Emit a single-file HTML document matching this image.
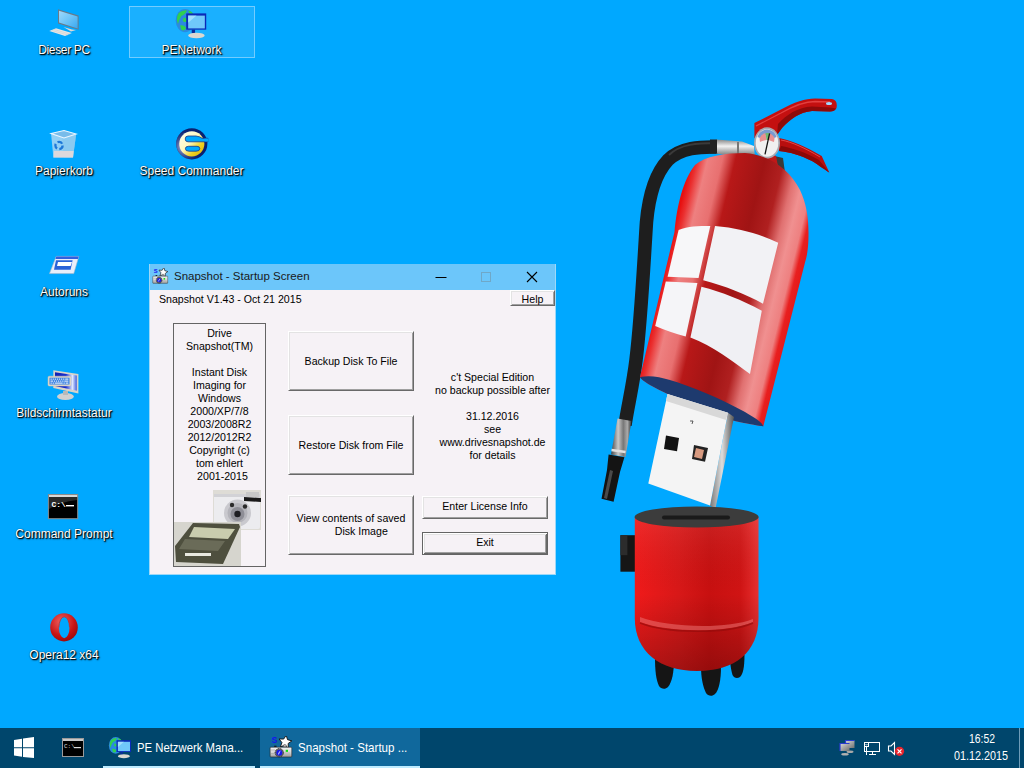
<!DOCTYPE html>
<html><head><meta charset="utf-8">
<style>
html,body{margin:0;padding:0;}
body{width:1024px;height:768px;overflow:hidden;position:relative;background:#00A8FF;font-family:"Liberation Sans",sans-serif;}
.abs{position:absolute;}
.lbl{position:absolute;color:#fff;font-size:12px;text-align:center;white-space:nowrap;text-shadow:1px 1px 1px #000,1px 1px 2px rgba(0,0,0,.8),0 0 1px rgba(0,0,0,.6);line-height:14px;}
#win{position:absolute;left:149px;top:264px;width:407px;height:311px;box-sizing:border-box;border:1px solid #9CD8F8;border-top:0;background:#F6F2F6;box-shadow:inset 0 26px 0 #6CC6FA;}

.t{position:absolute;font-size:10.6px;color:#000;white-space:nowrap;line-height:13px;}
.btn{position:absolute;box-sizing:border-box;background:#F6F2F6;border-top:1px solid #fff;border-left:1px solid #fff;border-right:1px solid #696969;border-bottom:1px solid #696969;box-shadow:inset 1px 1px 0 #E3E3E3,inset -1px -1px 0 #A0A0A0;}
.def{border:1px solid #646464;box-shadow:inset 1px 1px 0 #fff,inset -1px -1px 0 #696969,inset 2px 2px 0 #E3E3E3,inset -2px -2px 0 #A0A0A0;}
#tb{position:absolute;left:0;top:728px;width:1024px;height:40px;background:#00466C;}
.tt{position:absolute;color:#fff;font-size:12px;white-space:nowrap;line-height:14px;}
</style></head>
<body>
<svg width="0" height="0" style="position:absolute"><defs>
 <linearGradient id="snb" x1="0" y1="0" x2="0" y2="1"><stop offset="0" stop-color="#F4F4F4"/><stop offset="0.6" stop-color="#D0D0D0"/><stop offset="1" stop-color="#9A9A9A"/></linearGradient>
 <symbol id="snapico" viewBox="0 0 24 24">
  <text x="2.4" y="7.2" font-family="Liberation Sans" font-weight="bold" font-size="8.5" fill="#1414F0">S</text>
  <path d="M17.22,-0.72 L18.52,3.65 L22.91,4.89 L19.15,7.48 L19.33,12.04 L15.71,9.26 L11.43,10.84 L12.94,6.54 L10.12,2.96 L14.68,3.07 Z" fill="#fff" stroke="#111" stroke-width=".9"/>
  <path d="M14.3,11 L14.3,9 Q15.8,7.8 17.3,9 L17.3,11 Z" fill="#bbb" stroke="#444" stroke-width=".5"/>
  <rect x="5.2" y="9.7" width="2.3" height="1.2" fill="#111"/>
  <rect x="1.1" y="11.2" width="21.7" height="9.8" rx=".8" fill="url(#snb)" stroke="#222" stroke-width=".6"/>
  <path d="M2,14 H6 M2,17.5 H6 M15,17 H21 M15,19 H21" stroke="#A8A8A8" stroke-width=".7"/>
  <circle cx="10.3" cy="16.7" r="4.2" fill="#666" stroke="#222" stroke-width=".9" stroke-dasharray="1 .8"/>
  <circle cx="10.3" cy="16.7" r="3" fill="#1818E8"/>
  <path d="M9.6,18.4 Q9.8,15.8 11.4,15.2" stroke="#fff" stroke-width=".9" fill="none"/>
  <rect x="16.7" y="13.8" width="2.3" height="2.1" fill="#10E010"/>
 </symbol>
 <symbol id="peico" viewBox="0 0 24 24">
  <ellipse cx="7.65" cy="9.4" rx="6.8" ry="8.4" fill="#2A8AE0"/>
  <path d="M3,4 Q6,1.5 9,2 Q8,5 5,6 Q3,9 2.5,12 Q0.8,8 3,4 Z M10,2 Q13,3 14,5 Q12,6 10.5,4 Z M4,13 Q7,12 8.5,15 Q7,17.5 5,16 Z M6.5,7.5 Q9,7 9,10 Q7,11 6,9.5 Z" fill="#30D050"/>
  <rect x="8.5" y="4.2" width="14.5" height="11.8" fill="#0A2AB8"/>
  <rect x="9.9" y="5.8" width="12.1" height="9.3" fill="#70C8FA"/>
  <path d="M9.9,5.8 L16,5.8 L9.9,11 Z" fill="#B8E8FF" opacity=".7"/>
  <rect x="12.5" y="16" width="2.4" height="2.5" fill="#0A2A9A"/>
  <ellipse cx="15.9" cy="20.2" rx="6" ry="2" fill="#DCD8D0"/>
 </symbol></defs></svg>
<!-- desktop icons -->
<svg class="abs" style="left:0;top:0" width="260" height="700">
 <defs>
  <linearGradient id="scr" x1="0" y1="0" x2="1" y2="1"><stop offset="0" stop-color="#9ED8FA"/><stop offset="0.5" stop-color="#6CC4F8"/><stop offset="1" stop-color="#3AA8F0"/></linearGradient>
  <radialGradient id="opg" cx="0.4" cy="0.3" r="0.8"><stop offset="0" stop-color="#F06060"/><stop offset="0.6" stop-color="#C81414"/><stop offset="1" stop-color="#900808"/></radialGradient>
  <linearGradient id="kbs" x1="0" y1="0" x2="1" y2="0"><stop offset="0" stop-color="#1020B0"/><stop offset="0.5" stop-color="#1830D0"/><stop offset="0.8" stop-color="#E0E8FF"/><stop offset="1" stop-color="#4060E0"/></linearGradient>
  <linearGradient id="scg" x1="0" y1="0" x2="1" y2="1"><stop offset="0" stop-color="#FFFFF4"/><stop offset="0.45" stop-color="#FFF8C0"/><stop offset="0.7" stop-color="#F0D020"/><stop offset="1" stop-color="#D8B000"/></linearGradient>
  <radialGradient id="scr2" cx="0.25" cy="0.6" r="0.6"><stop offset="0" stop-color="#C8D8F8"/><stop offset="1" stop-color="#0A2070" stop-opacity="0"/></radialGradient>
 </defs>
 <!-- Dieser PC -->
 <path d="M58,9.3 L78.6,15.6 L78.6,29.8 L58,23.4 Z" fill="#6A7A88"/>
 <path d="M59,10.8 L77.6,16.5 L77.6,28.5 L59,22.6 Z" fill="url(#scr)"/>
 <path d="M63.5,27 L72,29.5 L76,30 L71,31.5 Z" fill="#DADADA"/>
 <path d="M49.3,31 L56,28.3 L71.8,33 L65,36.1 Z" fill="#E6E6E6"/>
 <path d="M52,30.5 L68,35 M54,29.5 L70,34" stroke="#C8C8C8" stroke-width=".5"/>
 <!-- PENetwork selection -->
 <rect x="129.5" y="6.5" width="125" height="51" fill="rgba(255,255,255,0.1)" stroke="rgba(150,215,255,0.75)" stroke-width="1"/>
 <use href="#peico" x="174.5" y="7.6" width="33.1" height="33.1"/>
 <!-- Papierkorb -->
 <path d="M51.1,134 L76.1,134.5 L73,157.5 L53.4,157.5 Z" fill="#9ED4F4" opacity=".92"/>
 <path d="M62,136 L76.1,134.5 L73,157.5 L64,157.5 Z" fill="#86C6EE" opacity=".6"/>
 <path d="M51.1,133.5 L64,130.5 L76.1,134 L64,138 Z" fill="#78BCEA" stroke="#EAF6FF" stroke-width="1.1"/>
 <path d="M54,151 L73.6,151 L73,157.5 L53.4,157.5 Z" fill="#DCD8DC"/>
 <circle cx="59" cy="145.5" r="3.6" fill="none" stroke="#1E78D8" stroke-width="2.3" stroke-dasharray="5.2 2.3"/>
 <!-- Speed Commander -->
 <circle cx="191.8" cy="143.8" r="15.6" fill="#0A2070"/>
 <circle cx="191.8" cy="143.8" r="15.6" fill="url(#scr2)"/>
 <circle cx="191.8" cy="143.8" r="12.6" fill="url(#scg)"/>
 <path d="M188,136 L196,136 Q200,136.5 202,138.3 L208,138.3 L208,141.8 L188,141.8 Q185.2,141.8 185.2,139 Q185.2,136 188,136 Z" fill="#00A8FF" stroke="#1A3A88" stroke-width=".8"/>
 <path d="M188.5,146.3 L197,146.3 Q199.8,146.3 199.8,148.7 Q199.8,151.2 196,151.2 L189,151.2 Q185.4,151.2 185.4,148.7 Q185.4,146.3 188.5,146.3 Z" fill="#00A8FF" stroke="#1A3A88" stroke-width=".8"/>
 <path d="M204.5,138.6 L208.5,138.6 L208.5,141.5 L204.5,141.5 Z" fill="#00A8FF"/>
 <!-- Autoruns -->
 <path d="M56.2,256.4 L78.8,256.4 L73.75,273.6 L49.5,273.6 Z" fill="#E8EEFA" stroke="#B0B8C8" stroke-width=".6"/>
 <path d="M56.2,256.4 L78.8,256.4 L78,259 L55.5,259 Z" fill="#3060E0"/>
 <path d="M56,260.3 L72.6,260.3 L70.6,269.7 L54,269.7 Z" fill="#2A62D8"/>
 <path d="M58,262 L72,262 L70.6,266 L57,266 Z" fill="#fff"/>
 <!-- Bildschirmtastatur -->
 <ellipse cx="65.4" cy="396.5" rx="8.4" ry="3.6" fill="#D0D0D0"/>
 <rect x="63" y="391" width="5" height="4" fill="#B8B8B8"/>
 <path d="M53.3,370.2 L78.4,374 L78.4,393.6 L53.3,388 Z" fill="#D8D4CA"/>
 <path d="M55,372.3 L76.8,375.6 L76.8,390.8 L55,386 Z" fill="url(#kbs)"/>
 <rect x="48" y="376.2" width="23" height="9.8" rx="1.2" fill="#E2DCCC" stroke="#C8C0B0" stroke-width=".5"/>
 <rect x="49.5" y="377.7" width="20" height="6.8" fill="#2E7AE0"/>
 <g fill="#fff">
  <rect x="50.5" y="378.6" width="1.3" height="1"/><rect x="52.6" y="378.6" width="1.3" height="1"/><rect x="54.7" y="378.6" width="1.3" height="1"/><rect x="56.8" y="378.6" width="1.3" height="1"/><rect x="58.9" y="378.6" width="1.3" height="1"/><rect x="61" y="378.6" width="1.3" height="1"/><rect x="63.1" y="378.6" width="1.3" height="1"/><rect x="65.2" y="378.6" width="3.2" height="1"/>
  <rect x="50.5" y="380.6" width="2.5" height="1"/><rect x="53.8" y="380.6" width="1.3" height="1"/><rect x="55.9" y="380.6" width="1.3" height="1"/><rect x="58" y="380.6" width="1.3" height="1"/><rect x="60.1" y="380.6" width="1.3" height="1"/><rect x="62.2" y="380.6" width="1.3" height="1"/><rect x="64.3" y="380.6" width="4.1" height="1"/>
  <rect x="50.5" y="382.6" width="1.3" height="1"/><rect x="52.6" y="382.6" width="1.3" height="1"/><rect x="54.7" y="382.6" width="8" height="1"/><rect x="63.5" y="382.6" width="1.3" height="1"/><rect x="65.6" y="382.6" width="2.8" height="1"/>
 </g>
 <!-- Command Prompt -->
 <rect x="48.4" y="494.5" width="29.3" height="24.2" fill="#000" stroke="#8C8C8C" stroke-width="1"/>
 <rect x="49" y="495" width="28.3" height="2.2" fill="#D8D8D8"/>
 <path d="M49,497 L77,497 L77,500 Q60,502 49,509 Z" fill="#2a2a2a"/>
 <text x="51.5" y="506.5" font-family="Liberation Mono" font-size="8" fill="#fff" font-weight="bold">C:\</text>
 <rect x="66" y="505" width="8" height="1.4" fill="#fff"/>
 <!-- Opera -->
 <ellipse cx="64" cy="627.4" rx="13.8" ry="14.1" fill="url(#opg)"/>
 <ellipse cx="64.2" cy="627.5" rx="5.3" ry="10.7" fill="#00A8FF"/>
 <path d="M58.9,627.5 A5.3,10.7 0 0 1 69.5,627.5" fill="none" stroke="#C03030" stroke-width=".8"/>
</svg>
<div class="lbl" style="left:14px;top:43px;width:100px;letter-spacing:-0.35px">Dieser PC</div>
<div class="lbl" style="left:141.5px;top:43px;width:100px;">PENetwork</div>
<div class="lbl" style="left:14px;top:164px;width:100px;">Papierkorb</div>
<div class="lbl" style="left:131.5px;top:164px;width:120px;">Speed Commander</div>
<div class="lbl" style="left:14px;top:285px;width:100px;">Autoruns</div>
<div class="lbl" style="left:4px;top:406px;width:120px;">Bildschirmtastatur</div>
<div class="lbl" style="left:4px;top:527px;width:120px;">Command Prompt</div>
<div class="lbl" style="left:14px;top:648px;width:100px;">Opera12 x64</div>

<!-- extinguisher -->
<svg class="abs" style="left:0;top:0" width="1024" height="728">
 <defs>
  <linearGradient id="body" gradientUnits="userSpaceOnUse" x1="657" y1="300" x2="796" y2="334">
   <stop offset="0" stop-color="#E81010"/>
   <stop offset="0.04" stop-color="#EA3030"/>
   <stop offset="0.11" stop-color="#EE8080"/>
   <stop offset="0.21" stop-color="#E87070"/>
   <stop offset="0.3" stop-color="#B81818"/>
   <stop offset="0.5" stop-color="#A01414"/>
   <stop offset="0.63" stop-color="#B02020"/>
   <stop offset="0.72" stop-color="#E07070"/>
   <stop offset="0.79" stop-color="#F09090"/>
   <stop offset="0.86" stop-color="#EE8080"/>
   <stop offset="0.9" stop-color="#E82020"/>
   <stop offset="1" stop-color="#E01010"/>
  </linearGradient>
  <linearGradient id="cap" gradientUnits="userSpaceOnUse" x1="635" y1="0" x2="759" y2="0">
   <stop offset="0" stop-color="#F01A1A"/>
   <stop offset="0.35" stop-color="#D81818"/>
   <stop offset="0.6" stop-color="#C81010"/>
   <stop offset="0.85" stop-color="#D01414"/>
   <stop offset="1" stop-color="#E83030"/>
  </linearGradient>
  <linearGradient id="capv" gradientUnits="userSpaceOnUse" x1="0" y1="517" x2="0" y2="671"><stop offset="0" stop-color="#fff" stop-opacity=".08"/><stop offset="0.5" stop-color="#000" stop-opacity="0"/><stop offset="1" stop-color="#000" stop-opacity=".25"/></linearGradient>
  <linearGradient id="silver" x1="0" y1="0" x2="0" y2="1">
   <stop offset="0" stop-color="#888"/>
   <stop offset="0.35" stop-color="#f2f2f2"/>
   <stop offset="0.7" stop-color="#9a9a9a"/>
   <stop offset="1" stop-color="#555"/>
  </linearGradient>
  <linearGradient id="ferr" x1="0" y1="0" x2="1" y2="0"><stop offset="0" stop-color="#444"/><stop offset="0.35" stop-color="#c8c8c8"/><stop offset="0.6" stop-color="#777"/><stop offset="0.8" stop-color="#aaa"/><stop offset="1" stop-color="#333"/></linearGradient>
  <linearGradient id="usbside" x1="0" y1="0" x2="1" y2="0">
   <stop offset="0" stop-color="#777"/>
   <stop offset="0.5" stop-color="#ddd"/>
   <stop offset="1" stop-color="#555"/>
  </linearGradient>
 </defs>
 <!-- hose -->
 <path d="M718,147 C700,146.5 681,147.5 668,160 C653,176 648.5,200 646.5,222 C644,260 641,320 636,360 C633,385 628,405 625,425" fill="none" stroke="#1E1E1E" stroke-width="13.5"/>
 <path d="M716,143 C698,143 680,144 669,155" fill="none" stroke="#3A3A3A" stroke-width="2"/>
 <path d="M617.5,418.5 L631.5,421 L625.5,457 L611,454.5 Z" fill="url(#ferr)"/>
 <path d="M611.5,450 L625.5,452" stroke="#e0e0e0" stroke-width="2.5"/>
 <path d="M608.6,454.4 L624.4,457.3 L620,472 L613.6,501.7 L601.5,498.8 L607,470 Z" fill="#141414"/>
 <path d="M610,470 L613,471 L607,499 L604,498 Z" fill="#4a4a4a"/>
 <!-- neck under gauge -->
 <path d="M770,155 L783,158 L786,180 L772,172 Z" fill="#3a3a3a"/>
 <!-- upper lever -->
 <path d="M754.4,123 L780,110 C795,102 805,98.5 815,98.5 L832,99 C836,99.5 837.5,103 836.5,108 C835.5,110.5 833,111.5 830,111.5 L812,111 C800,112 790,119 782,128 L777,135 L754.4,138 Z" fill="#C41010"/>
 <path d="M777,135 L782,128 C790,119 800,112 812,111 L830,111.5 C833,111.5 835,110.5 836,108.5 L830,107.5 L812,106.5 C798,107 786,115 778,124 Z" fill="#8E0A0A"/>
 <path d="M756,126 L781,113 C795,105 805,101.5 815,101.5 L830,102" fill="none" stroke="#E24040" stroke-width="1.3"/>
 <ellipse cx="829" cy="103.5" rx="3" ry="1.5" fill="#9fd8ff"/>
 <!-- lower lever -->
 <path d="M779,138 C790,140 805,146 821.7,156 L829.3,172.5 C825,170 820,166 812,161 C800,155 790,152 779,151 Z" fill="#B80E0E"/>
 <path d="M781,146 C792,148 805,152 819,160 L829.3,172.5 C825,170 820,166 812,161 C800,155 790,152 779,151 Z" fill="#8A0808"/>
 <path d="M781,140 C792,142 805,148 820,157" fill="none" stroke="#E04848" stroke-width="1"/>
 <!-- fitting -->
 <path d="M716,139.5 L742,141.5 L754,146 L755,158.6 L740,157 L716,153.5 Z" fill="url(#silver)"/>
 <rect x="737" y="142" width="2" height="15" fill="#777"/>
 <path d="M710,139.5 L717,139.5 L717,153.5 L710,153.5 Z" fill="#222"/>
 <!-- gauge -->
 <path d="M760,156 Q768,152 776,156 L778,166 Q768,170 758,164 Z" fill="#C01818"/>
 <ellipse cx="767" cy="143" rx="13" ry="15.7" fill="#A8A8B0"/>
 <ellipse cx="767" cy="143" rx="11.3" ry="13.8" fill="#F0F0F0"/>
 <path d="M757.5,137 Q759,130.5 767,129.6 Q775,130.5 776.5,137 L774,138 Q767,132 760,138 Z" fill="#7A9AD0"/>
 <path d="M759.5,138.5 Q761,134 765.5,133 L766.5,140 Q762,141 760,142 Z" fill="#E89090"/>
 <path d="M768.5,133 Q773,134 774.5,138.5 L774,142 Q771,141 768.5,140 Z" fill="#E89090"/>
 <path d="M765.5,133 L769.5,133 L768.5,140 L766.5,140 Z" fill="#70B870"/>
 <line x1="765" y1="154.4" x2="769.6" y2="133.3" stroke="#111" stroke-width="1.3"/>
 <!-- body -->
 <path d="M640,377 L674.5,232 C677,205 683,180 695,165 C705,156 725,153 745,153 C770,155 790,170 800,190 C807,205 809,220 808.4,240 C808,250 807,256 805,262.5 L763.3,426.3 C745,424 725,419 713.3,413.75 C695,406 670,396 650.8,385.6 C645,382 641,379 640,377 Z" fill="url(#body)"/>
<!-- windows logo -->
 <path d="M678.6,229.9 C688,226 698,225.9 710.3,225.9 L698.5,277.9 L667.6,276.7 Z" fill="#F7F7F9"/>
 <path d="M715,225.9 C740,228 760,234 778.2,242.8 L763,303.7 C745,294 725,286 703.2,280.3 Z" fill="#F2F2F5"/>
 <path d="M665.8,281.4 L697.4,283 L685.7,336.5 C675,334 665,330 655.2,326 Z" fill="#F5F5F8"/>
 <path d="M701.4,286.8 C722,292 742,300 761.8,310.7 L750,374 C733,362 713,346 690.4,337.6 Z" fill="#F0F0F4"/>
 <!-- navy bottom -->
 <path d="M640,377 C650,375 660,377 669,379.7 C690,386 720,398 745,412 C755,418 762,422 763.3,426.3 C745,424 725,419 713.3,413.75 C695,406 670,396 650.8,385.6 C645,382 641,379 640,377 Z" fill="#1E3A6E"/>
 <!-- usb -->
 <path d="M728,412.7 L734,417 L715.4,509 L710,505.4 Z" fill="url(#usbside)"/>
 <path d="M667.5,394 L728,412.7 L710,505.4 L648.3,483.5 Z" fill="#F4F4F4"/>
 <path d="M667.5,394 L728,412.7 L726,420 L666,401 Z" fill="#D8D8D8"/>
 <path d="M666,435.6 L679,438 L677,451.3 L664,449 Z" fill="#111"/>
 <path d="M694,445 L708,448 L705,461.7 L692,459 Z" fill="#222"/>
 <path d="M696,448 L704,450 L702,459 L694,457 Z" fill="#D89A80"/>
 <path d="M690,421 L693,421 L692,424" stroke="#333" stroke-width=".8" fill="none"/>
 <!-- lower cap -->
 <rect x="620.4" y="535.2" width="15.5" height="36.5" fill="#161616"/>
 <rect x="620.4" y="535.2" width="7" height="20" fill="#2c2c2c"/>
 <path d="M655,658 L674,660 C674,672 672,682 668,687 C665,690 661,689 659,686 C656,680 655,670 655,658 Z" fill="#151515"/>
 <path d="M730,655 L744.5,655 C744.5,667 743,674 740,677 C737,679 734,678 732.5,675 C731,670 730,664 730,655 Z" fill="#151515"/>
 <path d="M701,666 L721,666 C721,680 719,690 715,694 C712,697 708,696 706,693 C703,687 701,678 701,666 Z" fill="#151515"/>
 <path d="M634.8,517 L758.5,517 L758.5,618 C758.5,652 735,671 697,671 C660,671 634.8,652 634.8,618 Z" fill="url(#cap)"/>
 <path d="M634.8,517 L758.5,517 L758.5,618 C758.5,652 735,671 697,671 C660,671 634.8,652 634.8,618 Z" fill="url(#capv)"/>
 <path d="M640,617 C665,627 725,630 753,619 L753,622 C725,634 665,632 640,622 Z" fill="#F07878" opacity=".5"/>
 <path d="M640,623 C665,633 725,635 753,623" fill="none" stroke="#900A0A" stroke-width="1.5" opacity=".6"/>
 <ellipse cx="696.6" cy="517" rx="62" ry="10.5" fill="#3C3C3C"/>
 <rect x="662" y="515.6" width="68" height="4" rx="2" fill="#1a1a1a"/>
</svg>
<!-- window -->
<div id="win">
  <div class="abs" style="left:24px;top:5px;font-size:11.5px;color:#1a1a1a;line-height:14px">Snapshot - Startup Screen</div>
</div>
<svg class="abs" style="left:149px;top:264px" width="407" height="25">
 <line x1="286.5" y1="13.5" x2="297.5" y2="13.5" stroke="#000" stroke-width="1"/>
 <rect x="332.5" y="8.5" width="9" height="9" fill="none" stroke="#6FA8C8" stroke-width="1"/>
 <path d="M378,8 L388,18 M388,8 L378,18" stroke="#000" stroke-width="1.1"/>
</svg>
<div class="t" style="left:159px;top:293px">Snapshot V1.43 - Oct 21 2015</div>
<div class="btn" style="left:510px;top:290px;width:45px;height:16px"></div>
<div class="t" style="left:510px;top:293px;width:45px;text-align:center">Help</div>
<div class="abs" style="left:173px;top:323px;width:91px;height:242px;border:1px solid #646464"></div>
<div class="t" style="left:174px;top:327px;width:91px;text-align:center">Drive<br>Snapshot(TM)<br><br>Instant Disk<br>Imaging for<br>Windows<br>2000/XP/7/8<br>2003/2008R2<br>2012/2012R2<br>Copyright (c)<br>tom ehlert<br>&nbsp;&nbsp;2001-2015</div>
<svg class="abs" style="left:173px;top:489px" width="93" height="78">
 <rect x="40" y="1" width="48" height="40" fill="#DEDCD6"/>
 <rect x="41" y="5" width="46" height="35" rx="2" fill="#ECECEF"/>
 <rect x="41" y="5" width="46" height="3" fill="#D2D2D6"/>
 <rect x="73" y="3" width="13" height="5" fill="#C8C8C8"/>
 <path d="M71,8 L88,9 L88,13 L71,12 Z" fill="#1A1A1A"/>
 <circle cx="64.5" cy="24" r="13.5" fill="#C9C9CE"/>
 <circle cx="64.5" cy="24" r="10" fill="#B4B4BA"/>
 <circle cx="64.5" cy="25" r="7" fill="#8E8E96"/>
 <circle cx="64.5" cy="25" r="3.2" fill="#1E1E22"/>
 <circle cx="59" cy="16" r="2.2" fill="#2A2A2A"/>
 <circle cx="72" cy="17.5" r="2.2" fill="#2A2A2A"/>
 <rect x="1" y="33" width="67" height="44" fill="#D6D5CE"/>
 <path d="M20,34 L66,35 L67,38 L50,75 L3,73 L2,57 Z" fill="#4E4F3E"/>
 <path d="M21,38 L62,40 L55,50 L16,48 Z" fill="#C9CCAE"/>
 <path d="M12,50 L52,52 L45,62 L6,60 Z" fill="#6A6B58"/>
 <rect x="12" y="64" width="26" height="3" fill="#E8E8E0"/>
</svg>
<svg class="abs" style="left:152.1px;top:268px" width="16.6" height="17.5" viewBox="0 0 24 24" preserveAspectRatio="none"><use href="#snapico"/></svg>
<div class="btn" style="left:288px;top:331px;width:126px;height:60px"></div>
<div class="t" style="left:288px;top:355px;width:126px;text-align:center">Backup Disk To File</div>
<div class="btn" style="left:288px;top:415px;width:126px;height:60px"></div>
<div class="t" style="left:288px;top:439px;width:126px;text-align:center">Restore Disk from File</div>
<div class="btn" style="left:288px;top:495px;width:126px;height:60px"></div>
<div class="t" style="left:288px;top:512px;width:126px;text-align:center">View contents of saved<br>&nbsp;&nbsp;&nbsp;&nbsp;&nbsp;&nbsp;&nbsp;Disk Image</div>
<div class="t" style="left:422.5px;top:371px;width:140px;text-align:center">c't Special Edition<br>no backup possible after<br><br>31.12.2016<br>see<br>www.drivesnapshot.de<br>for details</div>
<div class="btn" style="left:422px;top:496px;width:126px;height:23px"></div>
<div class="t" style="left:422px;top:500px;width:126px;text-align:center">Enter License Info</div>
<div class="btn def" style="left:422px;top:532px;width:126px;height:23px"></div>
<div class="t" style="left:422px;top:536px;width:126px;text-align:center">Exit</div>

<!-- taskbar -->
<div id="tb">
 <svg class="abs" style="left:0;top:0" width="1024" height="40">
  <path d="M14,12 L22,10.8 L22,19.2 L14,19.2 Z M23,10.6 L34,9 L34,19.2 L23,19.2 Z M14,20.3 L22,20.3 L22,28.8 L14,27.6 Z M23,20.3 L34,20.3 L34,30 L23,29 Z" fill="#fff"/>
  <rect x="62.5" y="10.5" width="21" height="18" fill="#000" stroke="#9a9a9a" stroke-width="1"/>
  <rect x="63" y="11" width="20" height="2" fill="#c8c8c8"/>
  <text x="64" y="20" font-family="Liberation Mono" font-size="6" fill="#ddd">C:\</text>
  <rect x="74" y="19" width="7" height="1.2" fill="#ddd"/>
  <rect x="260" y="0" width="160" height="40" fill="#10689C"/>
  <rect x="103" y="38" width="152" height="2" fill="#BDEBFF"/>
  <rect x="260" y="38" width="160" height="2" fill="#BDEBFF"/>
  <rect x="1019" y="0" width="1" height="40" fill="#6E9CB8"/>
 </svg>
 <!-- PE icon -->
 <svg class="abs" style="left:108px;top:8px" width="24" height="24" viewBox="0 0 24 24"><use href="#peico"/></svg>
 <div class="tt" style="left:137px;top:13px;font-size:13px;transform:scaleX(0.87);transform-origin:0 0">PE Netzwerk Mana...</div>
 <!-- snapshot icon -->
 <svg class="abs" style="left:269px;top:8px" width="24" height="24" viewBox="0 0 24 24"><use href="#snapico"/></svg>
 <div class="tt" style="left:297.5px;top:13px;font-size:13px;transform:scaleX(0.89);transform-origin:0 0">Snapshot - Startup ...</div>
 <!-- tray -->
 <svg class="abs" style="left:836px;top:8px" width="60" height="24">
  <defs><linearGradient id="mong" x1="0" y1="0" x2="1" y2="1"><stop offset="0" stop-color="#D8D8D8"/><stop offset="1" stop-color="#707070"/></linearGradient></defs>
  <ellipse cx="14" cy="15.8" rx="3.5" ry="1.2" fill="#A8A8A8"/>
  <rect x="9.5" y="4.5" width="9" height="7.5" fill="url(#mong)"/>
  <path d="M9.5,12 L9.5,4.5 L18.5,4.5" fill="none" stroke="#2A3CD0" stroke-width="1.2"/>
  <ellipse cx="9" cy="18.3" rx="3.8" ry="1.3" fill="#B0B0B0"/>
  <rect x="4" y="7.5" width="9.5" height="7.5" fill="url(#mong)"/>
  <path d="M4,15 L4,7.5 L13.5,7.5" fill="none" stroke="#2A3CD0" stroke-width="1.2"/>
  <g stroke="#fff" stroke-width="1" fill="none">
   <rect x="28.5" y="6.5" width="15" height="9"/>
   <rect x="28.5" y="6.5" width="4" height="4"/>
   <line x1="30.5" y1="10.5" x2="30.5" y2="19"/>
   <line x1="36.5" y1="15.5" x2="36.5" y2="18.5"/>
   <line x1="33" y1="18.5" x2="40" y2="18.5"/>
   <path d="M29.5,8 L30.5,9.2 L31.5,8" stroke-width=".8"/>
  </g>
  <path d="M52.5,10 L55,10 L58.5,6.5 L58.5,18.5 L55,15 L52.5,15 Z" stroke="#fff" stroke-width="1.1" fill="none"/>
 </svg>
 <svg class="abs" style="left:894px;top:18px" width="12" height="12">
  <circle cx="5.5" cy="5.3" r="4.6" fill="#E8242C"/>
  <path d="M3.5,3.3 L7.5,7.3 M7.5,3.3 L3.5,7.3" stroke="#fff" stroke-width="1.2"/>
 </svg>
 <div class="tt" style="left:969px;top:4px;font-size:13px;transform:scaleX(0.8);transform-origin:0 0">16:52</div>
 <div class="tt" style="left:954px;top:21px;font-size:13px;transform:scaleX(0.83);transform-origin:0 0">01.12.2015</div>
</div>
</body></html>
